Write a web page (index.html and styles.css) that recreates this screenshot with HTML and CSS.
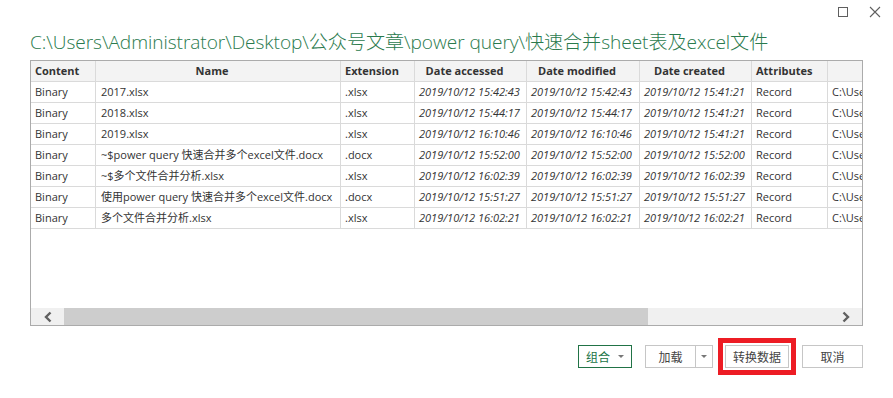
FILE: index.html
```html
<!DOCTYPE html>
<html lang="zh-CN">
<head>
<meta charset="utf-8">
<title>Navigator</title>
<link rel="stylesheet" href="styles.css">
</head>
<body>
<div class="dialog">
  <div class="winbar">
    <svg class="winbtn" width="12" height="12" viewBox="0 0 12 12"><rect x="1.5" y="1.5" width="9" height="9" fill="none" stroke="#5f5f5f" stroke-width="1"/></svg>
    <svg class="winbtn" width="12" height="12" viewBox="0 0 12 12"><path d="M1 1 L11 11 M11 1 L1 11" stroke="#5f5f5f" stroke-width="1.1" fill="none"/></svg>
  </div>
  <h1 class="title">C:\Users\Administrator\Desktop\公众号文章\power query\快速合并sheet表及excel文件</h1>
  <div class="grid">
    <div class="grid-body">
      <div class="row head">
        <div class="cell c1 left">Content</div>
        <div class="cell c2">Name</div>
        <div class="cell c3">Extension</div>
        <div class="cell c4">Date accessed</div>
        <div class="cell c5">Date modified</div>
        <div class="cell c6">Date created</div>
        <div class="cell c7">Attributes</div>
        <div class="cell c8 last"></div>
      </div>
      <div class="row">
        <div class="cell c1">Binary</div><div class="cell c2">2017.xlsx</div><div class="cell c3">.xlsx</div>
        <div class="cell c4 it">2019/10/12 15:42:43</div><div class="cell c5 it">2019/10/12 15:42:43</div><div class="cell c6 it">2019/10/12 15:41:21</div>
        <div class="cell c7">Record</div><div class="cell c8 last">C:\Use</div>
      </div>
      <div class="row">
        <div class="cell c1">Binary</div><div class="cell c2">2018.xlsx</div><div class="cell c3">.xlsx</div>
        <div class="cell c4 it">2019/10/12 15:44:17</div><div class="cell c5 it">2019/10/12 15:44:17</div><div class="cell c6 it">2019/10/12 15:41:21</div>
        <div class="cell c7">Record</div><div class="cell c8 last">C:\Use</div>
      </div>
      <div class="row">
        <div class="cell c1">Binary</div><div class="cell c2">2019.xlsx</div><div class="cell c3">.xlsx</div>
        <div class="cell c4 it">2019/10/12 16:10:46</div><div class="cell c5 it">2019/10/12 16:10:46</div><div class="cell c6 it">2019/10/12 15:41:21</div>
        <div class="cell c7">Record</div><div class="cell c8 last">C:\Use</div>
      </div>
      <div class="row">
        <div class="cell c1">Binary</div><div class="cell c2">~$power query 快速合并多个excel文件.docx</div><div class="cell c3">.docx</div>
        <div class="cell c4 it">2019/10/12 15:52:00</div><div class="cell c5 it">2019/10/12 15:52:00</div><div class="cell c6 it">2019/10/12 15:52:00</div>
        <div class="cell c7">Record</div><div class="cell c8 last">C:\Use</div>
      </div>
      <div class="row">
        <div class="cell c1">Binary</div><div class="cell c2">~$多个文件合并分析.xlsx</div><div class="cell c3">.xlsx</div>
        <div class="cell c4 it">2019/10/12 16:02:39</div><div class="cell c5 it">2019/10/12 16:02:39</div><div class="cell c6 it">2019/10/12 16:02:39</div>
        <div class="cell c7">Record</div><div class="cell c8 last">C:\Use</div>
      </div>
      <div class="row">
        <div class="cell c1">Binary</div><div class="cell c2">使用power query 快速合并多个excel文件.docx</div><div class="cell c3">.docx</div>
        <div class="cell c4 it">2019/10/12 15:51:27</div><div class="cell c5 it">2019/10/12 15:51:27</div><div class="cell c6 it">2019/10/12 15:51:27</div>
        <div class="cell c7">Record</div><div class="cell c8 last">C:\Use</div>
      </div>
      <div class="row">
        <div class="cell c1">Binary</div><div class="cell c2">多个文件合并分析.xlsx</div><div class="cell c3">.xlsx</div>
        <div class="cell c4 it">2019/10/12 16:02:21</div><div class="cell c5 it">2019/10/12 16:02:21</div><div class="cell c6 it">2019/10/12 16:02:21</div>
        <div class="cell c7">Record</div><div class="cell c8 last">C:\Use</div>
      </div>
    </div>
    <div class="hscroll">
      <div class="arrow">
        <svg width="10" height="12" viewBox="0 0 10 12"><path d="M7.5 1.5 L3 6 L7.5 10.5" fill="none" stroke="#606060" stroke-width="2.4"/></svg>
      </div>
      <div class="track"><div class="thumb"></div></div>
      <div class="arrow">
        <svg width="10" height="12" viewBox="0 0 10 12"><path d="M2.5 1.5 L7 6 L2.5 10.5" fill="none" stroke="#606060" stroke-width="2.4"/></svg>
      </div>
    </div>
  </div>
  <div class="footer">
    <div class="btn primary">组合<span class="caret"></span></div>
    <div class="split">
      <div class="btn-part">加载</div>
      <div class="btn-drop"><span class="caret"></span></div>
    </div>
    <div class="highlight"><div class="btn">转换数据</div></div>
    <div class="btn cancel">取消</div>
  </div>
</div>
</body>
</html>
```

FILE: styles.css
```css
html, body {
  margin: 0;
  padding: 0;
  background: #ffffff;
}
body {
  font-family: "Open Sans", "Noto Sans CJK SC", sans-serif;
  color: #333333;
}
.dialog {
  width: 893px;
  height: 398px;
  display: flex;
  flex-direction: column;
}
.winbar {
  height: 24px;
  display: flex;
  justify-content: flex-end;
  align-items: center;
  gap: 20px;
  padding-right: 12px;
}
.winbtn {
  display: block;
}
.title {
  margin: 3px 0 0 30px;
  height: 33px;
  font-family: "Open Sans", "Noto Sans CJK SC", sans-serif;
  font-weight: 300;
  font-size: 19.1px;
  line-height: 30px;
  color: #2a7a4d;
  white-space: nowrap;
  letter-spacing: -0.05px;
}
.grid {
  margin-left: 30px;
  width: 831px;
  height: 264px;
  border: 1px solid #ababab;
  display: flex;
  flex-direction: column;
  overflow: hidden;
}
.grid-body {
  flex: 1;
  overflow: hidden;
}
.row {
  display: flex;
  height: 20px;
  border-bottom: 1px solid #dadada;
  width: 1000px;
}
.row.head {
  background: #f3f3f3;
  font-weight: 700;
  color: #333333;
}
.cell {
  box-sizing: border-box;
  height: 20px;
  line-height: 20px;
  font-size: 11px;
  padding-left: 4px;
  border-right: 1px solid #dadada;
  white-space: nowrap;
  overflow: hidden;
}
.cell.last {
  border-right: none;
}
.head .cell {
  text-align: center;
  padding-right: 16px;
}
.head .cell.left {
  text-align: left;
  padding-right: 0;
}
.row:not(.head) .c2 {
  padding-left: 5px;
}
.it {
  font-style: italic;
}
.c1 { width: 65px; }
.c2 { width: 245px; }
.c3 { width: 74px; }
.c4 { width: 112px; }
.c5 { width: 113px; }
.c6 { width: 112px; }
.c7 { width: 76px; }
.c8 { width: 200px; }
.hscroll {
  height: 17px;
  background: #f0f0f0;
  display: flex;
  align-items: stretch;
}
.arrow {
  width: 33px;
  display: flex;
  align-items: center;
  justify-content: center;
}
.track {
  flex: 1;
  display: flex;
}
.thumb {
  width: 584px;
  background: #cdcdcd;
}
.footer {
  display: flex;
  justify-content: flex-end;
  align-items: center;
  padding-right: 30px;
  margin-top: 12px;
  font-family: "Noto Sans CJK SC", sans-serif;
  font-size: 12px;
  color: #444444;
}
.btn {
  box-sizing: border-box;
  height: 23px;
  border: 1px solid #c6c6c6;
  display: flex;
  align-items: center;
  justify-content: center;
  background: #ffffff;
}
.btn.primary {
  width: 54px;
  border-color: #217346;
  color: #217346;
  gap: 8px;
}
.caret {
  width: 0;
  height: 0;
  border-left: 3px solid transparent;
  border-right: 3px solid transparent;
  border-top: 3px solid #777777;
}
.split {
  margin-left: 13px;
  box-sizing: border-box;
  height: 23px;
  display: flex;
  border: 1px solid #c6c6c6;
}
.btn-part {
  width: 49px;
  display: flex;
  align-items: center;
  justify-content: center;
  border-right: 1px solid #c6c6c6;
}
.btn-drop {
  width: 16px;
  display: flex;
  align-items: center;
  justify-content: center;
}
.highlight {
  margin-left: 5px;
  border: 5px solid #ed1c24;
  padding: 2px 2px;
}
.highlight .btn {
  width: 64px;
}
.btn.cancel {
  margin-left: 6px;
  width: 61px;
}
```
